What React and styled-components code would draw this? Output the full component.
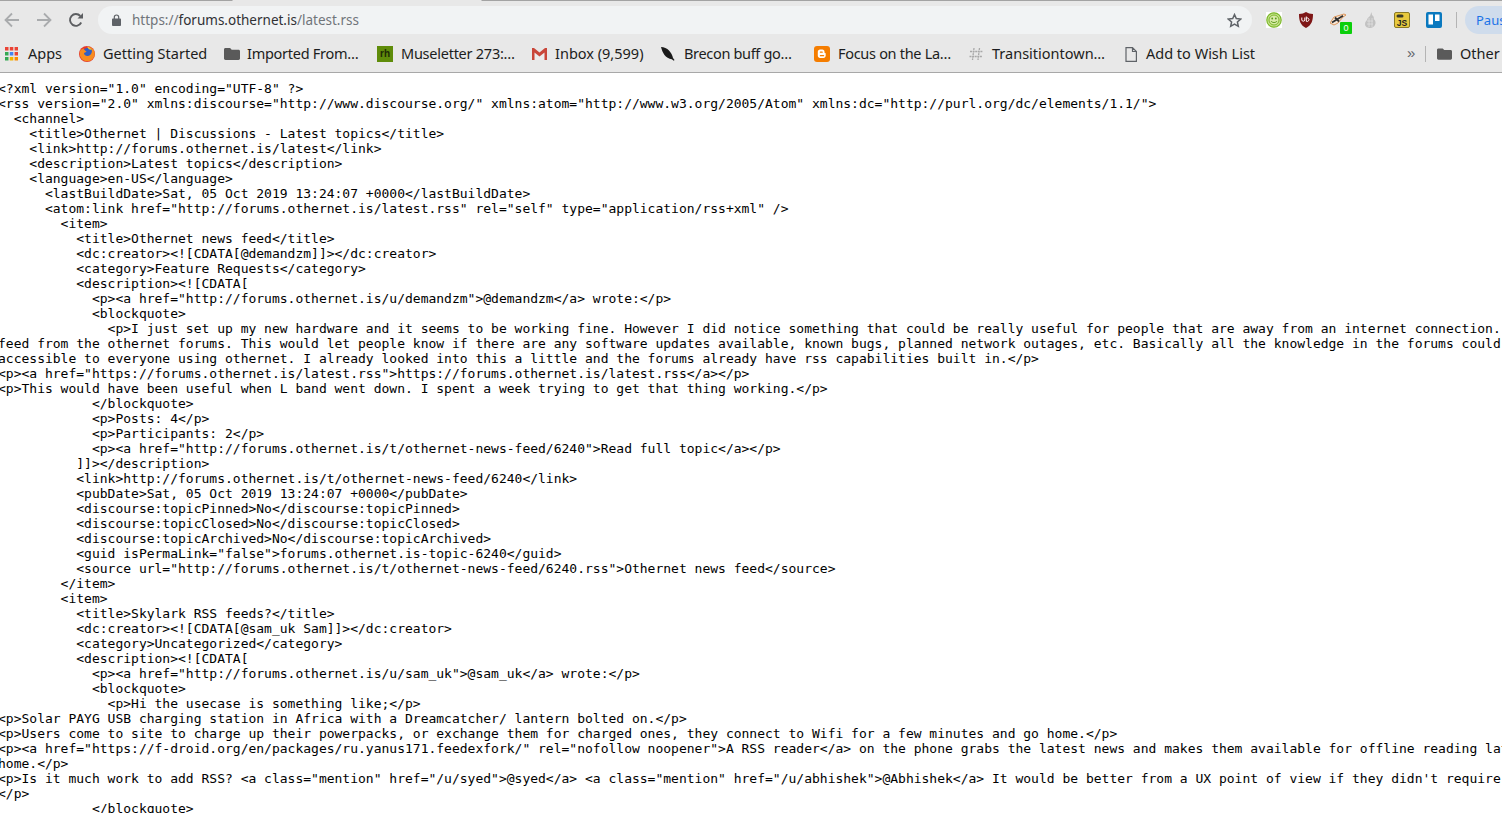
import React from "react"
import styled, { createGlobalStyle } from "styled-components"

const GlobalStyle = createGlobalStyle`
  html, body {
    margin: 0;
    padding: 0;
    height: 813px;
    overflow: hidden;
    background: #fff;
  }
`

const Page = styled.div`
  width: 1502px;
  height: 813px;
  overflow: hidden;
  display: flex;
  flex-direction: column;
`

const TabEdge = styled.div`
  height: 1px;
  flex: none;
  background: linear-gradient(
    to right,
    #a3a3a3 0,
    #a3a3a3 232px,
    #e8e8e8 233px,
    #e8e8e8 481px,
    #a3a3a3 482px
  );
`

const Toolbar = styled.div`
  height: 36px;
  flex: none;
  display: flex;
  align-items: center;
  background: #e8e8e8;
  padding-top: 2px;
  box-sizing: border-box;
  overflow: hidden;
`

const NavGroup = styled.div`
  display: flex;
  gap: 8px;
  flex: none;
`

const NavButton = styled.div`
  width: 24px;
  height: 20px;
  flex: none;
  display: flex;
  align-items: center;
  justify-content: center;
  color: ${(p) => (p.$off ? "#a9abad" : "#5c5e61")};
`

const Omnibox = styled.div`
  width: 1154px;
  height: 28px;
  margin-left: 10px;
  flex: none;
  display: flex;
  align-items: center;
  border-radius: 14px;
  background: #f1f3f4;
  padding: 0 10px 0 14px;
  box-sizing: border-box;
  font-family: "Noto Sans", sans-serif;
  font-size: 13.5px;
`

const UrlText = styled.span`
  margin-left: 11px;
  color: #70757a;
  flex: 1;
`

const UrlHost = styled.span`
  color: #303134;
`

const ExtArea = styled.div`
  display: flex;
  align-items: center;
  margin-left: 6px;
`

const ExtSlot = styled.div`
  position: relative;
  width: 32px;
  height: 24px;
  flex: none;
  display: flex;
  align-items: center;
  justify-content: center;
`

const CountBadge = styled.span`
  position: absolute;
  left: 18px;
  top: 14px;
  width: 12px;
  height: 12px;
  background: #0bcf0b;
  border-radius: 1px;
  color: #fff;
  font: 9px/12px "Liberation Sans", sans-serif;
  text-align: center;
`

const ToolbarDivider = styled.div`
  width: 1px;
  height: 16px;
  background: #b4b4b4;
  flex: none;
  margin: 0 8px 0 6px;
`

const PauseChip = styled.div`
  width: 60px;
  height: 28px;
  flex: none;
  border-radius: 14px;
  background: #cfdcec;
  color: #1a73e8;
  font-family: "Noto Sans", sans-serif;
  font-size: 13px;
  line-height: 28px;
  padding-left: 11px;
  box-sizing: border-box;
  white-space: nowrap;
`

const BookmarkBar = styled.div`
  height: 36px;
  flex: none;
  display: flex;
  align-items: center;
  background: #e8e8e8;
  border-bottom: 1px solid #a8a8a8;
  padding: 0 0 1px 4px;
  box-sizing: border-box;
  overflow: hidden;
  font-family: "Noto Sans", sans-serif;
  font-size: 14.5px;
  color: #1c1d20;
`

const Bookmark = styled.div`
  width: ${(p) => p.$w}px;
  flex: none;
  display: flex;
  align-items: center;
  gap: ${(p) => p.$gap}px;
  white-space: nowrap;
`

const BookmarkIcon = styled.span`
  width: ${(p) => p.$iw}px;
  height: 16px;
  flex: none;
  display: flex;
  align-items: center;
  justify-content: center;
`

const BookmarkLabel = styled.span`
  margin-top: -3px;
  letter-spacing: ${(p) => p.$ls || 0}px;
`

const Spacer = styled.div`
  flex: 1;
`

const Overflow = styled.div`
  color: #5f6368;
  font-size: 15px;
  width: 18px;
  flex: none;
  line-height: 20px;
  margin-top: -2px;
  font-family: "Liberation Sans", sans-serif;
`

const BarDivider = styled.div`
  width: 1px;
  height: 16px;
  background: #b4b4b4;
  flex: none;
  margin-right: 11px;
`

const RhMark = styled.span`
  width: 16px;
  height: 16px;
  background: #5f8c0a;
  color: #1d2a05;
  font: bold 10px/16px "Liberation Sans", sans-serif;
  text-align: center;
`

const Source = styled.pre`
  margin: 0 0 0 -2px;
  padding: 8px 0 0;
  font-family: "DejaVu Sans Mono", monospace;
  font-size: 13px;
  line-height: 15px;
  color: #000;
  white-space: pre;
  overflow: hidden;
  flex: 1;
`

const Folder = () => (
  <svg width="16" height="14" viewBox="0 0 16 14">
    <path d="M1.500 1h4.600l1.600 1.800h6.800c.8 0 1.500.6 1.500 1.400v7.400c0 .8-.7 1.400-1.500 1.400H1.500C.7 13 0 12.400 0 11.600V2.400C0 1.600.7 1 1.500 1z" fill="#5a5a5a" />
  </svg>
)

const AppsGrid = () => {
  const colors = ["#ea4335", "#ea4335", "#ea4335", "#34a853", "#4285f4", "#ea4335", "#34a853", "#f4b400", "#fb8c00"]
  return (
    <svg width="14" height="14" viewBox="0 0 14 14">
      {colors.map((c, i) => (
        <rect key={i} x={1 + (i % 3) * 4.8} y={Math.floor(i / 3) * 5} width="3.500" height="3.500" fill={c} />
      ))}
    </svg>
  )
}

const FirefoxLogo = () => (
  <svg width="16" height="16" viewBox="0 0 16 16">
    <circle cx="8" cy="8" r="8" fill="#e2382f" />
    <circle cx="9" cy="7" r="5.200" fill="#2f5fc4" />
    <path d="M1.500 4c-1.500 3-.8 7 1.800 9.500 3 2.600 7.700 2.400 10.300-.4C15.400 11.200 16.200 8.500 15.500 6 14.800 3.600 13 1.500 10.500.8c1.600 1.400 2.500 3 2.400 4.700-.2 2.700-2.300 4.600-4.600 4.500-2-.1-3.300-1.300-3.300-3l2.600-1.200L5 3.500 4.600 2.200z" fill="#f78c1f" />
    <path d="M8 .5c2 .2 3.800 1.500 4.700 3.400L9.800 3.200z" fill="#fbc02d" />
  </svg>
)

const GmailLogo = () => (
  <svg width="15" height="12" viewBox="0 0 15 12">
    <path d="M2.500 4.500l5 4 5-4V12h-10z" fill="#ececec" />
    <path d="M0 0h2l5.500 4.500L13 0h2v12h-2.500V4.500l-5 4-5-4V12H0z" fill="#c9463a" />
  </svg>
)

const Quill = () => (
  <svg width="14" height="14" viewBox="0 0 14 14">
    <path d="M0 0c3 0 6 1.500 8 3.500 2 2 3.500 5 4 7.500l1.500 2-.7.700-2-1.500C8 12 5 10 3.500 8 2 6 .8 3 0 0z" fill="#1a1a1a" />
  </svg>
)

const BloggerLogo = () => (
  <svg width="16" height="16" viewBox="0 0 16 16">
    <rect width="16" height="16" rx="3" fill="#f57d00" />
    <path d="M6 3.500h2.300c1.300 0 2.200 1 2.200 2.200v.8c0 .3.200.5.500.5h.2c.3 0 .5.200.5.500v2.300c0 1.200-1 2.200-2.200 2.200H6c-1.200 0-2.200-1-2.200-2.200V5.700C3.800 4.500 4.800 3.500 6 3.500z" fill="#fff" />
    <rect x="5.800" y="5.500" width="3" height="1.300" rx=".6" fill="#f57d00" />
    <rect x="5.800" y="9" width="4.400" height="1.300" rx=".6" fill="#f57d00" />
  </svg>
)

const HashLogo = () => (
  <svg width="14" height="14" viewBox="0 0 14 14" fill="none" stroke="#a8a8a8" strokeWidth="1.300" strokeDasharray="2 .6">
    <path d="M5 1 3.500 13M10.500 1 9 13M1 4.500h12.500M.5 9.500H13" />
  </svg>
)

const PageGlyph = () => (
  <svg width="12" height="15" viewBox="0 0 12 15" fill="none" stroke="#5f6368" strokeWidth="1.200">
    <path d="M1 .6h6.500L11.400 4.500v9.900H1zM7.500.6v3.900h3.900" />
  </svg>
)

const BackArrow = () => (
  <svg width="16" height="16" viewBox="0 0 16 16" fill="none" stroke="currentColor" strokeWidth="1.800">
    <path d="M15 8H2M8 1.500 1.500 8 8 14.500" />
  </svg>
)

const ForwardArrow = () => (
  <svg width="16" height="16" viewBox="0 0 16 16" fill="none" stroke="currentColor" strokeWidth="1.800">
    <path d="M1 8h13M8 1.500 14.500 8 8 14.500" />
  </svg>
)

const Reload = () => (
  <svg width="16" height="16" viewBox="0 0 16 16" fill="none" stroke="currentColor" strokeWidth="1.900">
    <path d="M13.200 10.500A5.900 5.900 0 1 1 12.300 4" />
    <path d="M15 1v5.600H9.500z" fill="currentColor" stroke="none" />
  </svg>
)

const Lock = () => (
  <svg width="9" height="12" viewBox="0 0 9 12">
    <path d="M1 4.500h7c.5 0 1 .4 1 1V11c0 .5-.5 1-1 1H1c-.5 0-1-.5-1-1V5.500c0-.6.500-1 1-1z" fill="#5f6368" />
    <path d="M2.300 5V3.200a2.200 2.200 0 0 1 4.400 0V5" fill="none" stroke="#5f6368" strokeWidth="1.200" />
  </svg>
)

const Star = () => (
  <svg width="15" height="15" viewBox="0 0 15 15" fill="none" stroke="#5f6368" strokeWidth="1.500">
    <path d="M7.500 1.600 9.300 5.600 13.700 6.100 10.400 9 11.300 13.300 7.500 11.100 3.700 13.300 4.600 9 1.300 6.100 5.700 5.600z" />
  </svg>
)

const Smiley = () => (
  <svg width="16" height="16" viewBox="0 0 16 16">
    <rect width="16" height="16" fill="#fff" />
    <circle cx="8" cy="8" r="7.200" fill="#c4e08a" stroke="#7cb82a" strokeWidth="1.200" />
    <circle cx="8" cy="8" r="5" fill="#d8eaa8" stroke="#7cb82a" strokeWidth="1" />
    <circle cx="6.200" cy="6.500" r=".9" fill="#5a9a1a" />
    <circle cx="9.800" cy="6.500" r=".9" fill="#5a9a1a" />
    <path d="M5 9c1 2 5 2 6 0" fill="none" stroke="#5a9a1a" />
  </svg>
)

const UBlock = () => (
  <svg width="14" height="16" viewBox="0 0 14 16">
    <path d="M7 0c2 1.300 4 1.800 7 2 0 6-1 11-7 14C1 13 0 8 0 2c3-.2 5-.7 7-2z" fill="#7e1616" />
    <path d="M2.800 5.500v2.500c0 1.600 3 1.600 3 0V5.500M7.300 4.500v5M7.300 6.300a1.700 1.700 0 1 1 0 2.800" fill="none" stroke="#fff" strokeWidth="1" />
  </svg>
)

const Plane = () => (
  <svg width="16" height="14" viewBox="0 0 16 14">
    <path d="M0 10 4 4l10-3 2 1-3 2-5 6-4 2z" fill="#f6e6d6" stroke="#d8813a" strokeWidth=".8" />
    <path d="M2 9.500 13 2.800M5 4.500l4 4" fill="none" stroke="#2e2e2e" strokeWidth="1.800" />
  </svg>
)

const GreyPear = () => (
  <svg width="12" height="16" viewBox="0 0 12 16">
    <path d="M7.500 0 8 3c2 1 2 3 1.800 4 2 2 2.200 4 1.200 6-1 2-3 3-5 3s-5-1-5-4c0-2 1-3 2-4 0-2 2-3 3-4z" fill="#c2c2c2" />
    <path d="M3 9h6M3 12h6M5 6v9M8 6v9" stroke="#e4e4e4" strokeWidth=".7" />
  </svg>
)

const JsBadge = () => (
  <svg width="16" height="16" viewBox="0 0 16 16">
    <rect x=".5" y=".5" width="15" height="15" rx="1.500" fill="#e8c93e" stroke="#8a7a24" />
    <rect x="2.500" y="2.500" width="7" height="3" rx="1.500" fill="#3a3a2a" />
    <text x="8" y="14" textAnchor="middle" fontFamily="Liberation Sans" fontWeight="700" fontSize="8.500" fill="#222">JS</text>
  </svg>
)

const TrelloLogo = () => (
  <svg width="16" height="16" viewBox="0 0 16 16">
    <rect width="16" height="16" rx="2" fill="#0a79bf" />
    <rect x="2.500" y="2.500" width="4.500" height="10" fill="#fff" />
    <rect x="9" y="2.500" width="4.500" height="6.500" fill="#fff" />
  </svg>
)

const bookmarks = [
  { w: 75, iw: 14, gap: 10, label: "Apps", icon: <AppsGrid /> },
  { w: 145, iw: 16, gap: 8, label: "Getting Started", icon: <FirefoxLogo /> },
  { w: 153, iw: 16, gap: 7, ls: -0.27, label: "Imported From…", icon: <Folder /> },
  { w: 155, iw: 16, gap: 8, ls: -0.25, label: "Museletter 273:…", icon: <RhMark>rh</RhMark> },
  { w: 129, iw: 15, gap: 8, label: "Inbox (9,599)", icon: <GmailLogo /> },
  { w: 153, iw: 14, gap: 9, ls: -0.33, label: "Brecon buff go…", icon: <Quill /> },
  { w: 155, iw: 16, gap: 8, ls: -0.3, label: "Focus on the La…", icon: <BloggerLogo /> },
  { w: 156, iw: 14, gap: 9, label: "Transitiontown…", icon: <HashLogo /> },
  { w: 130, iw: 12, gap: 9, label: "Add to Wish List", icon: <PageGlyph /> },
]

const source = `<?xml version="1.0" encoding="UTF-8" ?>
<rss version="2.0" xmlns:discourse="http://www.discourse.org/" xmlns:atom="http://www.w3.org/2005/Atom" xmlns:dc="http://purl.org/dc/elements/1.1/">
  <channel>
    <title>Othernet | Discussions - Latest topics</title>
    <link>http://forums.othernet.is/latest</link>
    <description>Latest topics</description>
    <language>en-US</language>
      <lastBuildDate>Sat, 05 Oct 2019 13:24:07 +0000</lastBuildDate>
      <atom:link href="http://forums.othernet.is/latest.rss" rel="self" type="application/rss+xml" />
        <item>
          <title>Othernet news feed</title>
          <dc:creator><![CDATA[@demandzm]]></dc:creator>
          <category>Feature Requests</category>
          <description><![CDATA[
            <p><a href="http://forums.othernet.is/u/demandzm">@demandzm</a> wrote:</p>
            <blockquote>
              <p>I just set up my new hardware and it seems to be working fine. However I did notice something that could be really useful for people that are away from an internet connection. An rss
feed from the othernet forums. This would let people know if there are any software updates available, known bugs, planned network outages, etc. Basically all the knowledge in the forums could be
accessible to everyone using othernet. I already looked into this a little and the forums already have rss capabilities built in.</p>
<p><a href="https://forums.othernet.is/latest.rss">https://forums.othernet.is/latest.rss</a></p>
<p>This would have been useful when L band went down. I spent a week trying to get that thing working.</p>
            </blockquote>
            <p>Posts: 4</p>
            <p>Participants: 2</p>
            <p><a href="http://forums.othernet.is/t/othernet-news-feed/6240">Read full topic</a></p>
          ]]></description>
          <link>http://forums.othernet.is/t/othernet-news-feed/6240</link>
          <pubDate>Sat, 05 Oct 2019 13:24:07 +0000</pubDate>
          <discourse:topicPinned>No</discourse:topicPinned>
          <discourse:topicClosed>No</discourse:topicClosed>
          <discourse:topicArchived>No</discourse:topicArchived>
          <guid isPermaLink="false">forums.othernet.is-topic-6240</guid>
          <source url="http://forums.othernet.is/t/othernet-news-feed/6240.rss">Othernet news feed</source>
        </item>
        <item>
          <title>Skylark RSS feeds?</title>
          <dc:creator><![CDATA[@sam_uk Sam]]></dc:creator>
          <category>Uncategorized</category>
          <description><![CDATA[
            <p><a href="http://forums.othernet.is/u/sam_uk">@sam_uk</a> wrote:</p>
            <blockquote>
              <p>Hi the usecase is something like;</p>
<p>Solar PAYG USB charging station in Africa with a Dreamcatcher/ lantern bolted on.</p>
<p>Users come to site to charge up their powerpacks, or exchange them for charged ones, they connect to Wifi for a few minutes and go home.</p>
<p><a href="https://f-droid.org/en/packages/ru.yanus171.feedexfork/" rel="nofollow noopener">A RSS reader</a> on the phone grabs the latest news and makes them available for offline reading later at
home.</p>
<p>Is it much work to add RSS? <a class="mention" href="/u/syed">@syed</a> <a class="mention" href="/u/abhishek">@Abhishek</a> It would be better from a UX point of view if they didn't require
</p>
            </blockquote>`

const App = () => (
  <Page>
    <GlobalStyle />
    <TabEdge />
    <Toolbar>
      <NavGroup>
        <NavButton $off><BackArrow /></NavButton>
        <NavButton $off><ForwardArrow /></NavButton>
        <NavButton><Reload /></NavButton>
      </NavGroup>
      <Omnibox>
        <Lock />
        <UrlText>
          https://<UrlHost>forums.othernet.is</UrlHost>/latest.rss
        </UrlText>
        <Star />
      </Omnibox>
      <ExtArea>
        <ExtSlot><Smiley /></ExtSlot>
        <ExtSlot><UBlock /></ExtSlot>
        <ExtSlot><Plane /><CountBadge>0</CountBadge></ExtSlot>
        <ExtSlot><GreyPear /></ExtSlot>
        <ExtSlot><JsBadge /></ExtSlot>
        <ExtSlot><TrelloLogo /></ExtSlot>
        <ToolbarDivider />
        <PauseChip>Paused</PauseChip>
      </ExtArea>
    </Toolbar>
    <BookmarkBar>
      {bookmarks.map((b) => (
        <Bookmark key={b.label} $w={b.w} $gap={b.gap}>
          <BookmarkIcon $iw={b.iw}>{b.icon}</BookmarkIcon>
          <BookmarkLabel $ls={b.ls}>{b.label}</BookmarkLabel>
        </Bookmark>
      ))}
      <Spacer />
      <Overflow>»</Overflow>
      <BarDivider />
      <Bookmark $w={65} $gap={8}>
        <BookmarkIcon $iw={15}><Folder /></BookmarkIcon>
        <BookmarkLabel>Other Bookmarks</BookmarkLabel>
      </Bookmark>
    </BookmarkBar>
    <Source>{source}</Source>
  </Page>
)

export default App
